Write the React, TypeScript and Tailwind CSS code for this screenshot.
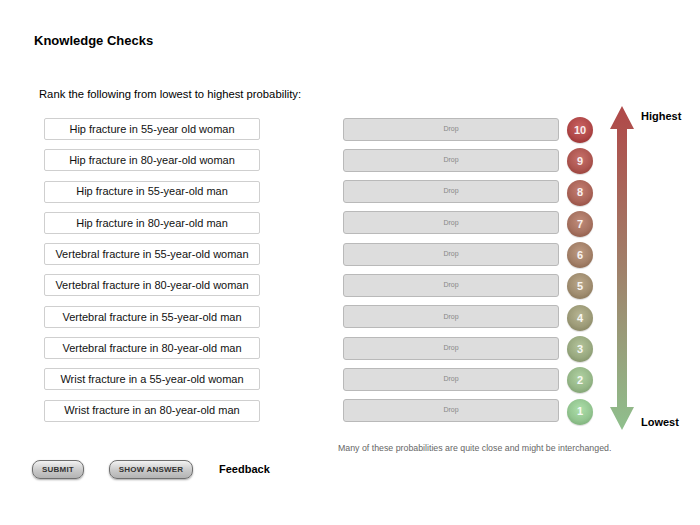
import React from "react";

const items = [
  "Hip fracture in 55-year old woman",
  "Hip fracture in 80-year-old woman",
  "Hip fracture in 55-year-old man",
  "Hip fracture in 80-year-old man",
  "Vertebral fracture in 55-year-old woman",
  "Vertebral fracture in 80-year-old woman",
  "Vertebral fracture in 55-year-old man",
  "Vertebral fracture in 80-year-old man",
  "Wrist fracture in a 55-year-old woman",
  "Wrist fracture in an 80-year-old man",
];

const top = [168, 64, 64];
const bot = [139, 189, 136];
function mix(t: number, k = 0) {
  const c = top.map((v, i) => Math.round(v + (bot[i] - v) * t + k));
  return `rgb(${c[0]},${c[1]},${c[2]})`;
}

function Ball({ n }: { n: number }) {
  const t = (10 - n) / 9;
  return (
    <div
      className="w-[26px] h-[26px] rounded-full flex items-center justify-center text-[11px] font-bold text-white/90"
      style={{
        background: `radial-gradient(circle at 50% 40%, ${mix(t, 35)} 0%, ${mix(t, 8)} 55%, ${mix(t, -28)} 100%)`,
        boxShadow: "0 1px 1px rgba(0,0,0,0.15)",
      }}
    >
      {n}
    </div>
  );
}

function Arrow() {
  return (
    <svg width="24" height="324" viewBox="0 0 24 324">
      <defs>
        <linearGradient id="ag" x1="0" y1="0" x2="0" y2="1">
          <stop offset="0" stopColor="#b04848" />
          <stop offset="0.5" stopColor="#a0806a" />
          <stop offset="1" stopColor="#8fc08d" />
        </linearGradient>
      </defs>
      <path
        d="M12 0 L24 23 L17 23 L17 301 L24 301 L12 324 L0 301 L7 301 L7 23 L0 23 Z"
        fill="url(#ag)"
      />
    </svg>
  );
}

function Btn({ label, w }: { label: string; w: string }) {
  return (
    <button
      className={`${w} h-[19px] rounded-[8px] border border-[#6f6f6f] text-[8px] font-bold text-[#333] tracking-[0.2px] shadow-[0_1px_2px_rgba(0,0,0,0.35)] bg-[linear-gradient(#f2f2f2,#c9c9c9_55%,#b3b3b3)]`}
    >
      {label}
    </button>
  );
}

export default function App() {
  return (
    <div
      className="w-[700px] h-[525px] bg-white text-black relative"
      style={{ fontFamily: '"Liberation Sans", Arial, sans-serif' }}
    >
      <div className="pt-[33px] pl-[34px] text-[13px] font-bold leading-[16px]">
        Knowledge Checks
      </div>
      <div className="pt-[38px] pl-[39px] text-[11.25px] leading-[14px]">
        Rank the following from lowest to highest probability:
      </div>
      <div className="flex pt-[17px]">
        <div className="pl-[44px] flex flex-col">
          {items.map((s) => (
            <div key={s} className="h-[31.3px] flex items-start">
              <div className="w-[216px] h-[22px] border border-[#cfcfcf] rounded-[2px] flex items-center justify-center text-[11px] text-[#111]">
                {s}
              </div>
            </div>
          ))}
        </div>
        <div className="ml-[83px] flex flex-col -mt-[0.5px]">
          {items.map((s) => (
            <div key={s} className="h-[31.3px] flex items-start">
              <div className="w-[216px] h-[23px] bg-[#dddddd] border border-[#b9b9b9] rounded-[3px] flex items-center justify-center text-[7px] text-[#888]">
                Drop
              </div>
            </div>
          ))}
        </div>
        <div className="ml-[8px] flex flex-col -mt-[1px]">
          {items.map((s, i) => (
            <div key={s} className="h-[31.3px] flex items-start">
              <Ball n={10 - i} />
            </div>
          ))}
        </div>
        <div className="ml-[17px] -mt-[12px]">
          <Arrow />
        </div>
        <div className="ml-[7px] flex flex-col justify-between -mt-[8.5px] h-[319px] text-[11px] leading-[13px] font-bold">
          <div>Highest</div>
          <div>Lowest</div>
        </div>
      </div>
      <div className="pl-[338px] mt-[11px] text-[8.8px] text-[#666]">
        Many of these probabilities are quite close and might be interchanged.
      </div>
      <div className="flex items-center pl-[32px] pt-[5px]">
        <Btn label="SUBMIT" w="w-[52px]" />
        <div className="w-[25px]" />
        <Btn label="SHOW ANSWER" w="w-[84px]" />
        <div className="ml-[26px] text-[11px] font-bold">Feedback</div>
      </div>
    </div>
  );
}
